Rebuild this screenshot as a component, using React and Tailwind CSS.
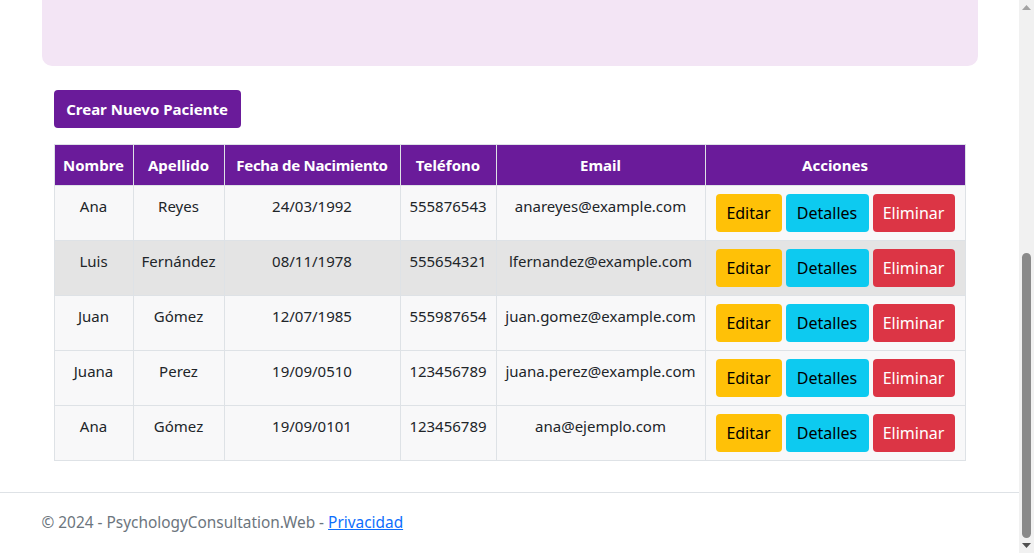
import React from 'react';

const patients = [
  { nombre: 'Ana', apellido: 'Reyes', fecha: '24/03/1992', tel: '555876543', email: 'anareyes@example.com' },
  { nombre: 'Luis', apellido: 'Fernández', fecha: '08/11/1978', tel: '555654321', email: 'lfernandez@example.com' },
  { nombre: 'Juan', apellido: 'Gómez', fecha: '12/07/1985', tel: '555987654', email: 'juan.gomez@example.com' },
  { nombre: 'Juana', apellido: 'Perez', fecha: '19/09/0510', tel: '123456789', email: 'juana.perez@example.com' },
  { nombre: 'Ana', apellido: 'Gómez', fecha: '19/09/0101', tel: '123456789', email: 'ana@ejemplo.com' },
];

const font = { fontFamily: '"Segoe UI", "Noto Sans", "Liberation Sans", sans-serif' };

function Scrollbar() {
  return (
    <div className="w-[15px] h-[553px] bg-[#f1f1f1] flex flex-col items-center shrink-0">
      <svg width="9" height="6" className="mt-[5px]" viewBox="0 0 9 6">
        <path d="M4.5 0 L9 5 L0 5 Z" fill="#a3a3a3" />
      </svg>
      <div className="flex-1" />
      <div className="w-[9px] h-[285px] rounded-full bg-[#8a8a8a]" />
      <svg width="9" height="6" className="mt-[5px] mb-[4px]" viewBox="0 0 9 6">
        <path d="M0 0 L9 0 L4.5 5 Z" fill="#505050" />
      </svg>
    </div>
  );
}

const th = 'border border-[#dee2e6] px-1 py-2 whitespace-nowrap';
const td = 'border border-[#dee2e6] px-1 py-2 align-top whitespace-nowrap';

export default function App() {
  return (
    <div className="flex w-[1034px] h-[553px] overflow-hidden bg-white text-[#212529] text-[15px] leading-6" style={font}>
      <div className="flex-1 flex flex-col">
        <div className="w-[960px] mx-auto px-3">
          {/* Hero box (top scrolled off) */}
          <div className="h-[66px] bg-[#f3e5f5] rounded-b-[10px]" />

          <div className="px-3 pt-6">
            <button className="h-[38px] w-[187px] rounded-[4px] bg-[#6a1b9a] text-white text-[15px] font-bold">
              Crear Nuevo Paciente
            </button>

            <table className="mt-4 w-[912px] table-fixed border-collapse border border-[#dee2e6] text-center">
              <thead>
                <tr className="bg-[#6a1b9a] text-white font-bold">
                  <th className={`${th} w-[79px]`}>Nombre</th>
                  <th className={`${th} w-[91px]`}>Apellido</th>
                  <th className={`${th} w-[176px] tracking-[-0.3px]`}>Fecha de Nacimiento</th>
                  <th className={`${th} w-[96px]`}>Teléfono</th>
                  <th className={`${th} w-[209px]`}>Email</th>
                  <th className={th}>Acciones</th>
                </tr>
              </thead>
              <tbody>
                {patients.map((p, i) => (
                  <tr key={i} className={i === 1 ? 'bg-[#e4e4e4]' : 'bg-[#f8f8f9]'}>
                    <td className={td}>{p.nombre}</td>
                    <td className={td}>{p.apellido}</td>
                    <td className={td}>{p.fecha}</td>
                    <td className={td}>{p.tel}</td>
                    <td className={td}>{p.email}</td>
                    <td className="border border-[#dee2e6] py-2 align-top">
                      <div className="flex gap-1 pl-[10px] text-base">
                        <button className="h-[38px] w-[66px] rounded-[4px] bg-[#ffc107] text-black">Editar</button>
                        <button className="h-[38px] w-[83px] rounded-[4px] bg-[#0dcaf0] text-black">Detalles</button>
                        <button className="h-[38px] w-[82px] rounded-[4px] bg-[#dc3545] text-white">Eliminar</button>
                      </div>
                    </td>
                  </tr>
                ))}
              </tbody>
            </table>
          </div>
        </div>

        <footer className="mt-[31px] border-t border-[#dee2e6] h-[60px] leading-[60px] text-[#6c757d] text-[15.4px]">
          <div className="w-[960px] mx-auto px-3">
            © 2024 - PsychologyConsultation.Web - <a className="text-[#0d6efd] underline" href="#">Privacidad</a>
          </div>
        </footer>
      </div>
      <Scrollbar />
    </div>
  );
}
